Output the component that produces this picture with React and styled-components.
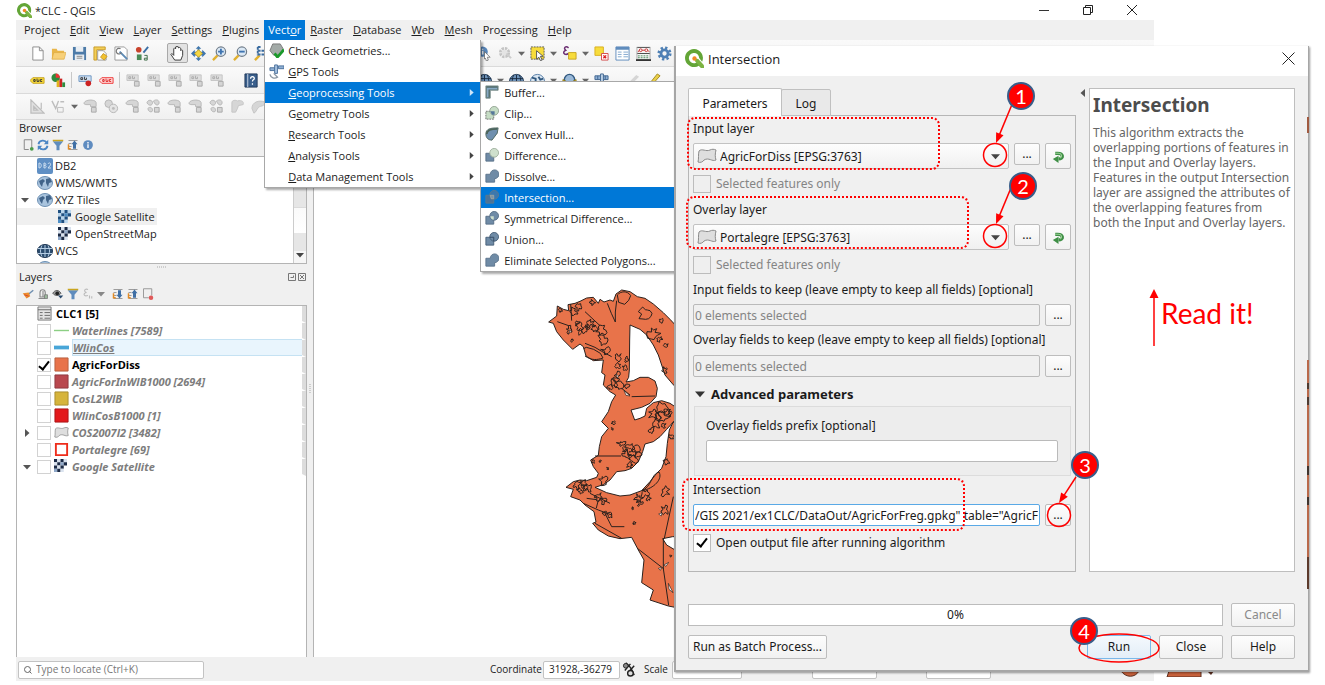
import React from "react";
import styled, { createGlobalStyle } from "styled-components";

const UI = '"Open Sans", "Noto Sans", sans-serif';
const FORM = '"Noto Sans", "Open Sans", sans-serif';

const Global = createGlobalStyle`
  * { box-sizing: border-box; }
  body { margin: 0; background: #fff; color: #1c1c1c; font: 11px/17px ${UI}; overflow: hidden; }
  button, input, select { font: inherit; color: inherit; margin: 0; }
  svg { display: block; flex: none; }
`;

/* ---------- main window ---------- */
const Desktop = styled.div`
  position: relative;
  height: 100vh;
  padding: 0 171px 4px 16px;
`;
const Win = styled.main`
  display: flex;
  flex-direction: column;
  height: 100%;
  background: #f0f0f0;
`;
const TitleBar = styled.header`
  display: flex;
  align-items: center;
  height: 20px;
  background: #fff;
  flex: none;
  padding-left: 1px;
`;
const TitleText = styled.h1`
  flex: 1;
  margin: 0;
  padding-left: 3px;
  font-weight: 400;
  font-size: 11px;
`;
const WinButton = styled.button`
  width: 44px;
  height: 20px;
  border: 0;
  padding: 0;
  background: none;
  display: grid;
  place-items: center;
`;
const MenuBar = styled.nav`
  display: flex;
  height: 20px;
  padding-left: 3px;
  flex: none;
`;
const MenuSlot = styled.div`
  position: relative;
`;
const MenuButton = styled.button`
  height: 20px;
  padding: 0 5px 1px;
  border: 0;
  white-space: nowrap;
  background: ${(p) => (p.$open ? "#0078d7" : "none")};
  color: ${(p) => (p.$open ? "#fff" : "inherit")};
  ${(p) => p.$open && "padding: 0 4px 1px;"}
`;
const Menu = styled.div`
  position: absolute;
  z-index: 5;
  left: 0;
  top: 100%;
  width: 217px;
  background: #fff;
  border: solid #a8a8a8;
  border-width: 0 1px 1px;
  box-shadow: 2px 2px 2px #0005;
  ${(p) => p.$sub && "left: 100%; top: -1px; width: 216px; border-top-width: 1px;"}
`;
const MenuRow = styled.div`
  position: relative;
`;
const MenuItem = styled.button`
  display: flex;
  align-items: center;
  width: 100%;
  height: 21px;
  padding: 0 5px 1px 4px;
  border: 0;
  gap: 4px;
  text-align: left;
  white-space: nowrap;
  background: ${(p) => (p.$on ? "#0078d7" : "#fff")};
  color: ${(p) => (p.$on ? "#fff" : "#1c1c1c")};
`;
const MenuIcon = styled.span`
  width: 15px;
  height: 15px;
  flex: none;
`;
const Grow = styled.span`
  flex: 1;
`;
const ToolBar = styled.div`
  display: flex;
  align-items: center;
  height: ${(p) => p.$h || 27}px;
  padding-left: 11px;
  flex: none;
  background: linear-gradient(#fafafa, #f0f0f0);
  border-bottom: 1px solid #dadada;
`;
const ToolButton = styled.button`
  width: 21px;
  height: 20px;
  padding: 0;
  border: 1px solid ${(p) => (p.$on ? "#a9a9a9" : "transparent")};
  border-radius: 2px;
  background: ${(p) => (p.$on ? "#e2e2e2" : "none")};
  display: grid;
  place-items: center;
  flex: none;
  ${(p) => p.$narrow && "width: 11px;"}
`;
const Gap = styled.span`
  flex: none;
  width: ${(p) => p.$w}px;
`;
const Divider = styled.span`
  flex: none;
  width: 1px;
  height: 16px;
  margin: 0 3px 0 2px;
  background: #c8c8c8;
`;
const Work = styled.div`
  display: flex;
  flex: 1;
  min-height: 0;
`;
const Dock = styled.aside`
  display: flex;
  flex-direction: column;
  width: 291px;
`;
const DockTitle = styled.div`
  display: flex;
  align-items: center;
  justify-content: space-between;
  height: 16px;
  line-height: 16px;
  padding: 0 1px 0 3px;
`;
const DockTools = styled.div`
  display: flex;
  align-items: center;
  gap: 3px;
  height: 18px;
  margin-bottom: 2px;
  padding-left: 6px;
`;
const MiniButton = styled.button`
  width: 12px;
  height: 12px;
  padding: 0;
  border: 0;
  background: none;
`;
const Tree = styled.div`
  position: relative;
  overflow: hidden;
  background: #fff;
  border: 1px solid #b4b4b4;
  ${(p) => (p.$fill ? "flex: 1; border-bottom: 0;" : "height: 108px; flex: none; padding-right: 13px;")}
`;
const Branch = styled.div`
  display: flex;
  align-items: center;
  height: 17px;
  width: ${(p) => (p.$on ? "140px" : "auto")};
  background: ${(p) => (p.$on ? "#f0f0f0" : "none")};
  padding-left: ${(p) => (p.$deep ? 41 : 4)}px;
  gap: ${(p) => (p.$deep ? 4 : 2)}px;
  white-space: nowrap;
`;
const Twisty = styled.span`
  width: 14px;
  flex: none;
`;
const ScrollTrack = styled.div`
  position: absolute;
  right: 0;
  top: 0;
  bottom: 0;
  width: 13px;
  border-left: 1px solid #ccc;
  background: linear-gradient(#e6e6e6 50px, #bbb 50px, #fafafa 51px, #fff 76px, #e6e6e6 76px, #e6e6e6 94px, #f6f6f6 94px);
  display: flex;
  align-items: flex-end;
  justify-content: center;
  padding-bottom: 4px;
`;
const Splitter = styled.div`
  height: ${(p) => (p.$v ? "auto" : "5px")};
  width: ${(p) => (p.$v ? "6px" : "auto")};
  display: grid;
  place-items: center;
  flex: none;
`;
const LayerRow = styled.div`
  display: flex;
  align-items: center;
  height: 17px;
  padding-left: 6px;
  border-right: 4px solid #dcdcdc;
  border-bottom: 2px solid #fff;
  white-space: nowrap;
`;
const LayerSymbol = styled.span`
  width: 15px;
  height: 15px;
  flex: none;
  margin: 0 3px 0 3px;
`;
const LayerName = styled.label`
  font-family: ${(p) => (p.$active ? UI : FORM)};
  font-weight: 700;
  line-height: 15px;
  color: ${(p) => (p.$active ? "#000" : "#7d7d7d")};
  font-style: ${(p) => (p.$active ? "normal" : "italic")};
  ${(p) =>
    p.$hover &&
    "flex: 1; height: 17px; line-height: 15px; text-decoration: underline; background: #e9f5fd; border: 1px solid #c5e2f3; border-right: 0;"}
`;
const Check = styled.input.attrs({ type: "checkbox" })`
  appearance: none;
  flex: none;
  display: grid;
  place-items: center;
  width: ${(p) => p.$s}px;
  height: ${(p) => p.$s}px;
  background: ${(p) => (p.disabled ? "#efefef" : "#fff")};
  border: 1px solid ${(p) => (p.$s > 15 ? "#bcbcbc" : "#d2d2d2")};
  &:checked::after {
    content: "";
    width: 4px;
    height: 9px;
    border: solid #000;
    border-width: 0 2px 2px 0;
    transform: rotate(38deg);
    margin-bottom: 3px;
  }
`;
const Canvas = styled.section`
  flex: 1;
  min-width: 0;
  overflow: hidden;
  background: #fff;
  border-left: 1px solid #b4b4b4;
  padding: 160px 0 0 216px;
`;
const StatusBar = styled.footer`
  display: flex;
  align-items: center;
  height: 24px;
  flex: none;
  padding: 1px 0 0 2px;
  font-size: 10px;
  overflow: hidden;
`;
const StatusBox = styled.div`
  display: flex;
  align-items: center;
  flex: none;
  gap: 4px;
  height: 18px;
  width: ${(p) => p.$w}px;
  padding: 0 5px;
  background: #fff;
  border: 1px solid #c3c3c3;
  border-radius: 2px;
`;
const PlainInput = styled.input`
  border: 0;
  padding: 0;
  width: 100%;
  min-width: 0;
  background: none;
  outline: 0;
  &::placeholder { color: #777; opacity: 1; }
`;
const StatusLabel = styled.label`
  margin-right: ${(p) => p.$r}px;
`;

/* ---------- dialog ---------- */
const Backdrop = styled.div`
  position: absolute;
  z-index: 4;
  right: 110px;
  bottom: 8px;
`;
const MapEdge = styled.div`
  position: absolute;
  z-index: 11;
  right: 16px;
  top: 117px;
  bottom: 96px;
  width: 2px;
  background:
    linear-gradient(#a05a40 16px, transparent 16px 243px, #b9694a 243px 266px, #4d3a30 266px 272px, #b9694a 272px 280px, #4d3a30 280px 288px, #b9694a 288px 349px, #3f332d 349px 358px, #b9694a 358px 380px, #3f332d 380px 388px, #b9694a 388px 440px, #5c3a2c 440px);
`;
const Dialog = styled.section`
  position: absolute;
  z-index: 10;
  left: 674px;
  right: 16px;
  top: 46px;
  display: flex;
  flex-direction: column;
  background: #f0f0f0;
  border: solid #a6a6a6;
  border-width: 0 1px 2px 2px;
  box-shadow: 1px 1px 2px #0006;
  font: 12px/16px ${FORM};
  color: #1a1a1a;
`;
const DialogTitle = styled.header`
  display: flex;
  align-items: center;
  gap: 4px;
  height: 30px;
  padding: 0 13px 5px 9px;
  background: #fff;
  font: 13px/20px ${UI};
`;
const DialogName = styled.h2`
  margin: 0;
  flex: 1;
  font: inherit;
`;
const CloseButton = styled.button`
  padding: 0;
  border: 0;
  background: none;
`;
const DialogBody = styled.div`
  display: grid;
  grid-template-columns: minmax(0, 388fr) 13px minmax(0, 206fr);
  padding: 12px 13px 0 12px;
`;
const Tabs = styled.div`
  display: flex;
  align-items: flex-end;
  height: 28px;
`;
const Tab = styled.button`
  width: ${(p) => (p.$on ? 94 : 50)}px;
  height: ${(p) => (p.$on ? 28 : 27)}px;
  border: 1px solid #c0c0c0;
  border-bottom-width: ${(p) => (p.$on ? 0 : 1)}px;
  border-radius: 2px 2px 0 0;
  margin-right: -1px;
  padding: 2px 0 0;
  background: ${(p) => (p.$on ? "#fff" : "#e9e9e9")};
`;
const Pane = styled.div`
  border: 1px solid #b6b6b6;
  margin-top: -1px;
  height: 457px;
  padding: 3px 4px 0;
`;
const Field = styled.div`
  position: relative;
  padding-bottom: ${(p) => p.$b || 0}px;
`;
const Label = styled.label`
  display: block;
  height: ${(p) => p.$h || 23}px;
  padding-top: ${(p) => p.$t || 0}px;
  line-height: 18px;
  white-space: nowrap;
`;
const Row = styled.div`
  display: flex;
  align-items: flex-start;
  gap: 5px;
`;
const Combo = styled.div`
  position: relative;
  flex: 1;
  min-width: 0;
`;
const Select = styled.select`
  appearance: none;
  width: 100%;
  height: 26px;
  padding: 2px 30px 0 26px;
  border: 1px solid #c2c2c2;
  border-radius: 2px;
  background: linear-gradient(#fdfdfd, #f0f0f0);
`;
const Over = styled.span`
  position: absolute;
  pointer-events: none;
  ${(p) => (p.$end ? "right: 9px; top: 9px;" : "left: 4px; top: 3px;")}
`;
const Button = styled.button`
  height: ${(p) => p.$h || 22}px;
  width: ${(p) => p.$w || 26}px;
  flex: none;
  display: grid;
  place-items: center;
  padding: 0;
  border: 1px solid ${(p) => (p.$default ? "#7ab8ea" : "#bdbdbd")};
  border-radius: 2px;
  white-space: nowrap;
  background: ${(p) => (p.$default ? "linear-gradient(#f4f9fd, #e3eef7)" : "linear-gradient(#fdfdfd, #f1f1f1)")};
  &:disabled { color: #8a8a8a; }
`;
const CheckLine = styled.label`
  display: flex;
  align-items: center;
  gap: 5px;
  height: 18px;
  margin-top: ${(p) => p.$t || 6}px;
  color: ${(p) => (p.$off ? "#858585" : "inherit")};
`;
const TextInput = styled.input`
  display: block;
  flex: 1;
  min-width: 0;
  width: 100%;
  height: 22px;
  padding: 0 1px;
  border: 1px solid ${(p) => (p.$focus ? "#5aa9e6" : "#bababa")};
  border-radius: 2px;
  background: ${(p) => (p.readOnly ? "#f0f0f0" : "#fff")};
  color: ${(p) => (p.readOnly ? "#858585" : "inherit")};
  outline: 0;
`;
const GroupTitle = styled.button`
  display: flex;
  align-items: center;
  gap: 6px;
  height: 25px;
  padding: 0 0 0 2px;
  border: 0;
  background: none;
  font-weight: 700;
  font-size: 13px;
`;
const GroupBox = styled.div`
  height: 70px;
  margin-left: 1px;
  padding: 10px 12px 0 11px;
  border: 1px solid #dcdcdc;
  background: #ededed;
`;
const Collapse = styled.div`
  padding: 1px 0 0 3px;
`;
const HelpPane = styled.article`
  background: #fff;
  border: 1px solid #bebebe;
  padding: 6px 3px;
  color: #666;
  line-height: 15px;
`;
const HelpTitle = styled.h3`
  margin: 0 0 10px;
  font-size: 19px;
  line-height: 20px;
  color: #4d4d4d;
`;
const HelpText = styled.p`
  margin: 0;
`;
const DialogFoot = styled.footer`
  display: grid;
  gap: 8px;
  padding: 31px 13px 11px 12px;
`;
const FootRow = styled.div`
  display: flex;
  align-items: center;
  gap: 8px;
`;
const Progress = styled.div`
  flex: 1;
  height: 22px;
  border: 1px solid #bcbcbc;
  background: #fff;
  text-align: center;
  line-height: 20px;
`;
const Anchor = styled.div`
  position: relative;
  flex: none;
`;

/* ---------- red tutorial marks ---------- */
const Dotted = styled.span`
  position: absolute;
  z-index: 2;
  pointer-events: none;
  border: 2px dotted #f00;
  border-radius: 8px;
  top: ${(p) => p.$t}px;
  left: ${(p) => p.$l}px;
  width: ${(p) => p.$w}px;
  height: 53px;
`;
const Callout = styled.span`
  position: absolute;
  z-index: 3;
  pointer-events: none;
  right: ${(p) => p.$r}px;
  top: ${(p) => p.$t}px;
`;
const Num = styled.span`
  position: absolute;
  left: ${(p) => p.$x}px;
  top: ${(p) => p.$y}px;
  width: 28px;
  height: 28px;
  border: 2px solid #385d8a;
  border-radius: 50%;
  background: #f00;
  color: #fff;
  font: 20px/24px Lato, sans-serif;
  text-align: center;
`;
const Note = styled.div`
  display: flex;
  gap: 2px;
  margin: 59px 0 0 56px;
  color: #f00;
  font: 28px/48px Lato, sans-serif;
`;

/* ---------- icons ---------- */
const Svg = ({ s = 15, w, h, vb = "0 0 16 16", children }) => (
  <svg width={w || s} height={h || s} viewBox={vb} fill="none" aria-hidden="true">
    {children}
  </svg>
);
const Tri = ({ d = "down", c = "#555", w = 7 }) => (
  <Svg w={w} h={w} vb="0 0 8 8">
    <path fill={c} d={{ down: "M0 2h8L4 6.5z", right: "M2 0v8l4.5-4z", left: "M6 0v8L1.500 4z" }[d]} />
  </Svg>
);
const QLogo = ({ s }) => (
  <Svg s={s} vb="0 0 20 20">
    <path d="M9.500 0a9.500 9.500 0 1 0 5 17.600L17 20h3l-4.500-5-3-1-2 .9A5.400 5.400 0 1 1 14.900 9.500l3.100 4A9.500 9.500 0 0 0 9.500 0z" fill="#63a537" />
    <path d="m11 10 3 .5L20 17v3h-3l-6.500-7z" fill="#7cb342" />
    <circle cx="10" cy="10" r="2.300" fill="#f08a24" />
  </Svg>
);
const Poly = ({ w = 16 }) => (
  <Svg w={w} h={w} vb="0 0 20 20">
    <path d="M2 5c3-3 7 1 11-1 2-1 4-1 6 0-1 4-1 7 0 10-4 2-7-3-12 0-1 2-4 3-6 2 1-4 0-7 1-11z" fill="#dedede" stroke="#8b8b8b" />
  </Svg>
);
const Tiles = ({ dark }) => {
  const c = dark ? ["#1c2b46", "#8fa8c8", "#d9e2ee"] : ["#1f4f80", "#4d8ec6", "#b9d6ee"];
  const cells = [0, 2, 0, 2, 2, 0, 1, 0, 0, 2, 0, 9, 1, 0, 2, 9];
  return (
    <Svg s={13}>
      {cells.map((v, i) => (v < 9 ? <rect key={i} x={(i % 4) * 4} y={Math.floor(i / 4) * 4} width="4" height="4" fill={c[v]} /> : null))}
    </Svg>
  );
};
const Globe = ({ dark }) => (
  <Svg w={16} h={16}>
    <ellipse cx="8" cy="8" rx="7.500" ry="6.500" fill={dark ? "#2b4c6f" : "#a9c4de"} stroke={dark ? "#1d3552" : "#6d90b3"} />
    {dark ? (
      <path d="M1 5.500h14M1 10.500h14M8 2v12M5 2.500c-2 4-2 7 0 11M11 2.500c2 4 2 7 0 11" stroke="#b5cde4" />
    ) : (
      <path d="M2 6l4-2 2 2-2 2-1 4-2-3zM9 4l4-1 2 4-3 1-1 4-2-4z" fill="#41648a" />
    )}
  </Svg>
);
const Db2 = () => (
  <Svg s={16}>
    <rect width="16" height="16" rx="2" fill="#5f8fc4" />
    <path d="M2 5v5c3 0 3-5 0-5M7 5v5c3 0 3-2.500 0-2.500 2.500 0 2.500-2.500 0-2.500M11 6c1-2 3-1 2.500 1L11 10h3" stroke="#cfe0f2" />
  </Svg>
);
const Blade = () => <path d="M9 9h5v5H9z" fill="#d5d5d5" stroke="#aaa" />;
const Mag = ({ sign }) => (
  <>
    <path d="M6 10 1 15" stroke="#e0b030" strokeWidth="2.500" />
    <circle cx="9.500" cy="6" r="5" fill="#dce9f5" stroke="#6e7b88" strokeWidth="1.300" />
    <path d={sign === "+" ? "M9.500 3v6M6.500 6h6" : "M6.500 6h6"} stroke="#3f74b0" strokeWidth="2" />
  </>
);
const art = {
  newdoc: <path d="M3 1h7l4 4v10H3zM10 1v4h4" fill="#fff" stroke="#8c8c8c" />,
  open: (
    <>
      <path d="M1 3h5l1 2h7v9H1z" fill="#e9b64a" />
      <path d="M1 14 3 7h13l-2 7z" fill="#f7d079" stroke="#d9a63a" strokeWidth=".6" />
    </>
  ),
  save: (
    <>
      <path d="M1 1h14v14H1z" fill="#4d7ba8" />
      <path d="M4 1h8v5H4zM3 9h10v6H3z" fill="#e9eef3" />
      <path d="M5 11h6M5 13h6" stroke="#888" />
    </>
  ),
  layout: (
    <>
      <path d="M1 1h12v3H4v11H1z" fill="#f3cf57" stroke="#c99a28" />
      <path d="M5 5h6l3 3v7H5z" fill="#fff" stroke="#999" />
      <path d="m11 8 4 3-3 4-4-3z" fill="#f2c230" stroke="#c99a28" />
    </>
  ),
  layouts: (
    <>
      <path d="M1 1h10l3 3v11H1z" fill="#fff" stroke="#999" />
      <path d="m6 6 8 8" stroke="#5e8bb5" strokeWidth="2" />
      <path d="M7 3a3 3 0 1 0 1 4" stroke="#777" strokeWidth="1.300" />
    </>
  ),
  style: (
    <>
      <circle cx="4" cy="4" r="3" fill="#c9432c" />
      <path d="m9 7 5-6" stroke="#3a6ea5" strokeWidth="2" />
      <path d="M2 9h5v6H2z" fill="#4b8b57" />
      <path d="M10 10h3v5h-3v-2h3" stroke="#3b6b44" />
    </>
  ),
  hand: <path d="M5 15 1 9l1-1 2 2V3l1-1 1 1V1l1.500-.5L9 1v1l1-.5 1.500 1V5l1-1 1 1v5l-2 5z" fill="#fff" stroke="#333" />,
  pan: (
    <>
      <path d="M8 0l3 3H9v3h3V4l4 4-4 4v-2H9v3h2l-3 3-3-3h2v-3H4v2L0 8l4-4v2h3V3H5z" fill="#3f76ad" />
      <path d="m8 4 4 4-4 4-4-4z" fill="#f6d743" stroke="#c9a520" />
    </>
  ),
  zin: <Mag sign="+" />,
  zout: <Mag sign="-" />,
  zfull: (
    <>
      <path d="M6 10 1 15" stroke="#e0b030" strokeWidth="2.500" />
      <path d="M4 1v9M4 5h10M12 1v4M4 1h3M4 9h10" stroke="#3b6ca0" strokeWidth="2" strokeDasharray="3 1" />
    </>
  ),
  identify: (
    <>
      <circle cx="6" cy="6" r="5.500" fill="#5785b8" />
      <path d="M6 3v1M6 5v4" stroke="#fff" strokeWidth="1.500" />
      <path d="m8 6 6 6h-3l1 3-2 1-1-3-1 1z" fill="#fff" stroke="#666" strokeWidth=".8" />
    </>
  ),
  action: (
    <>
      <circle cx="7" cy="7" r="4.500" stroke="#c4c4c4" strokeWidth="3" strokeDasharray="2.500 1" />
      <circle cx="7" cy="7" r="3" fill="#e4e4e4" />
      <path d="m9 8 5 5" stroke="#ccc" strokeWidth="2" />
    </>
  ),
  select: (
    <>
      <path d="M1 1h14v13H1z" fill="#f7dc3c" stroke="#555" strokeDasharray="2 1" />
      <path d="m7 5 7 6h-3l2 4-2 .5L9.500 12 7 14z" fill="#fff" stroke="#555" />
    </>
  ),
  expr: (
    <>
      <path d="M7 2C4-.5 1 2 4 4.500 0 6 2 11 7 8" stroke="#6b2d72" strokeWidth="1.600" />
      <path d="M7 7h8v7H7z" fill="#f7dc3c" stroke="#c9a520" />
    </>
  ),
  deselect: (
    <>
      <path d="M1 1h9v9H1z" fill="#f7dc3c" stroke="#d9b020" />
      <path d="M8 8h7v7H8z" fill="#fff" stroke="#d24b4b" />
      <path d="m10 10 3 3m0-3-3 3" stroke="#d22" strokeWidth="1.500" />
    </>
  ),
  table: (
    <>
      <path d="M1 1h14v14H1z" fill="#fff" stroke="#5f8cbd" />
      <path d="M1 2.500h14" stroke="#5f8cbd" strokeWidth="3" />
      <path d="M3 6.500h4M3 9h4M3 11.500h4M9 6.500h5M9 9h5M9 11.500h5" stroke="#7fa6ce" />
    </>
  ),
  stats: (
    <>
      <path d="M1 1.500h14M1 8h14" stroke="#444" />
      <circle cx="5" cy="4.500" r="1.500" stroke="#c33" />
      <circle cx="11" cy="4.500" r="1.500" stroke="#c33" />
      <path d="M2 6.500l1.500-2M6.500 4.500l3 0M12.500 4.500l2 2" stroke="#c33" />
      <path d="M2 10.500h12M2 12.500h12" stroke="#4a8a5a" strokeDasharray="2 1" />
      <path d="M0 15h16" stroke="#333" strokeWidth="2" />
      <path d="M1 1v13M15 1v13" stroke="#aaa" />
    </>
  ),
  gear: (
    <>
      <circle cx="8" cy="8" r="6" stroke="#4f80b5" strokeWidth="3" strokeDasharray="2.400 2.300" />
      <circle cx="8" cy="8" r="3.800" stroke="#4f80b5" strokeWidth="3" />
    </>
  ),
  tagY: (
    <>
      <path d="M0 8l3-3h12v6H3z" fill="#f6d93b" stroke="#c9a520" />
      <path d="M4 7h1.500v2H4zM7.500 6v3h2V7M13 7h-2v2h2" stroke="#333" />
    </>
  ),
  pie: (
    <>
      <circle cx="5" cy="5" r="4.500" fill="#2e8b3d" />
      <path d="M5 5V.5A4.500 4.500 0 0 1 9.500 5z" fill="#e33" />
      <path d="M6 8h3v7H6z" fill="#e2b21e" />
      <path d="M9 6h3v9H9z" fill="#c22" />
      <path d="M12 10h3v5h-3z" fill="#2e8b3d" />
    </>
  ),
  tagPin: (
    <>
      <path d="M1 3h13v6H1z" fill="#cfe0f2" stroke="#6d95c2" />
      <path d="M3 5h2v2H3zM7 4v3h2V5" stroke="#333" />
      <circle cx="11" cy="11" r="3" fill="#c22" />
    </>
  ),
  tagR: (
    <>
      <path d="M0 8l3-3h12v6H3z" fill="#fdd" stroke="#e33" />
      <path d="M4 7h1.500v2H4zM7.500 6v3h2V7M13 7h-2v2h2" stroke="#d22" />
    </>
  ),
  tagG: (
    <>
      <path d="M1 2h12v6H1z" fill="#dedede" stroke="#c4c4c4" />
      <path d="M3 4h2v2H3zM7 3v3h2V4" stroke="#aaa" />
      <Blade />
    </>
  ),
  book: (
    <>
      <path d="M1 1h13v14H1z" fill="#3a5f8c" stroke="#21395a" />
      <path d="M4 1v14" stroke="#cdd9e8" />
      <path d="M7 6c0-3 4-3 4 0 0 1-2 1-2 3M9 11v1.500" stroke="#fff" strokeWidth="1.300" />
    </>
  ),
  ruler: <path d="M1 1v14h14zM4 8v4h4zM12 11V4" fill="#e0e0e0" stroke="#bdbdbd" strokeWidth="1.300" />,
  vert: (
    <>
      <path d="m1 2 4 8 3-8M10 3h4" stroke="#bdbdbd" strokeWidth="1.500" />
      <path d="M7 9h6v5H7z" stroke="#bdbdbd" />
    </>
  ),
  shapeA: (
    <>
      <path d="M1 5c0-5 13-5 13-1v4H8V6H3z" fill="#d6d6d6" stroke="#b9b9b9" />
      <Blade />
    </>
  ),
  shapeB: (
    <>
      <path d="M1 4c1-4 6-3 6 0s-4 4-6 0zM8 2c3-2 6-1 6 2s-4 4-6-2zM2 10c2-2 5-1 5 2s-5 2-5-2z" fill="#d6d6d6" stroke="#b5b5b5" />
      <Blade />
    </>
  ),
  shapeC: (
    <>
      <circle cx="5" cy="5" r="4" fill="#d6d6d6" stroke="#b5b5b5" />
      <circle cx="10" cy="10" r="4.500" fill="#e4e4e4" stroke="#b5b5b5" />
      <circle cx="10" cy="10" r="1.500" fill="#bbb" />
    </>
  ),
  shapeD: <path d="M2 14V4c0-3 4-3 6-2 5-1 7 1 6 4l-5 1-1 3-2 4z" fill="#d6d6d6" stroke="#c4c4c4" />,
  shapeE: <path d="M1 10c0-7 8-9 13-7 2 5-4 4-6 6s-3 6-5 6z" fill="#d6d6d6" stroke="#c4c4c4" />,
  world: (
    <>
      <circle cx="8" cy="9" r="7.500" fill="#6f94ba" stroke="#1d3552" />
      <path d="M1 6h14M8 2v14M5 2c-2 4-2 8 0 12M11 2c2 4 2 8 0 12" stroke="#16293f" />
    </>
  ),
  worldL: (
    <>
      <circle cx="8" cy="9" r="7.500" fill="#dbe7f2" stroke="#5079a3" />
      <path d="M2 5l4 1v4M9 4l2 3 3-1" stroke="#31587f" strokeWidth="2" />
    </>
  ),
  box3: (
    <>
      <circle cx="8" cy="7" r="5.500" fill="#9ab9d8" stroke="#31587f" strokeWidth="1.500" />
      <path d="M1 7l7 4 7-4v8H1z" fill="#e9c52c" stroke="#8a7418" />
    </>
  ),
  sat: (
    <>
      <path d="M1 3h14v4H1z" fill="#8fb0d4" stroke="#3f648f" />
      <path d="M7 1h3v9H7zM4 3v4M12 3v4" fill="#c3d6ea" stroke="#3f648f" />
      <path d="M2 9c0 3 2 5 5 5l1-3" stroke="#7f93a8" strokeWidth="1.500" />
    </>
  ),
  pen: <path d="m3 15 1-4 8-10 3 2-9 10z" fill="#e9cf4a" stroke="#a48a1e" />,
  penG: <path d="m2 15 2-5 8-8 3 2-9 9z" fill="#d5d5d5" />,
};
const gp = {
  check: (
    <>
      <path d="M4 1h8l3 5-3 7H5L1 8z" fill="#a3aaa7" stroke="#777" />
      <path d="m6 11 3 4 7-8" stroke="#1a9a2a" strokeWidth="3" />
    </>
  ),
  sat: (
    <>
      <path d="M1 4h5v3H1zM10 2h6v3h-6z" fill="#8fb0d4" stroke="#4a6f9b" />
      <path d="M6 1h3v9H6z" fill="#a9c4e2" stroke="#4a6f9b" />
      <path d="M1 11c1 4 5 5 8 3l-4-4" stroke="#8a96a3" strokeWidth="1.500" />
    </>
  ),
  buffer: (
    <>
      <path d="M1 1h14v5H6v9H1z" fill="#4f6b6b" stroke="#7d9190" />
      <path d="M3 14V4h11" stroke="#87a9c4" strokeWidth="2" />
    </>
  ),
  clip: (
    <>
      <path d="M1 6h9v9H1z" fill="#c5dcc4" stroke="#666" strokeDasharray="2 1" />
      <circle cx="10.500" cy="5.500" r="5" fill="#c5dcc4" stroke="#8fa08f" />
      <path d="M6 6h5v4H8z" fill="#56789a" />
    </>
  ),
  hull: (
    <>
      <path d="M1 8C1 2 6 1 15 1l-1 6-6 8c-5 0-7-3-7-7z" fill="#6f8fae" stroke="#4c6459" />
      <path d="M2 8c0-5 5-6 12-6" stroke="#4c6459" strokeWidth="2" />
    </>
  ),
  diff: (
    <>
      <path d="M1 6h9v9H1z" fill="#6f8ba6" stroke="#536c84" />
      <circle cx="10.500" cy="5.500" r="5" fill="#cfe0cd" stroke="#9aab99" />
    </>
  ),
  dissolve: <path d="M1 6h5a5 5 0 1 1 5 5v4H1z" fill="#6f8ba6" stroke="#587189" />,
  inter: (
    <>
      <path d="M1 6h9v9H1z" fill="#4a7399" stroke="#5f7a8c" />
      <circle cx="10.500" cy="5.500" r="5" fill="#3c78ad" stroke="#5f7a8c" />
      <path d="M6 6h4v4H7z" fill="#7b93a5" stroke="#c2b9a0" strokeWidth=".6" />
    </>
  ),
  sym: (
    <>
      <path d="M1 6h9v9H1z" fill="#6f8ba6" stroke="#536c84" />
      <circle cx="10.500" cy="5.500" r="5" fill="#6f8ba6" stroke="#536c84" />
      <path d="M6 6h4v4c-2 0-4-2-4-4z" fill="#cfe0cd" />
    </>
  ),
  union: (
    <>
      <path d="M1 6h9v9H1z" fill="#6f8ba6" stroke="#415a73" />
      <circle cx="10.500" cy="5.500" r="5" fill="#6f8ba6" stroke="#415a73" />
      <path d="M5.500 6H10v4.500" stroke="#2f465e" />
    </>
  ),
};
const mini = {
  add: (
    <>
      <path d="M3 1h10v10M3 1v13h6" stroke="#888" strokeWidth="1.300" />
      <circle cx="13" cy="13" r="2.500" fill="#4b9b4b" />
    </>
  ),
  refresh: (
    <>
      <path d="M2 7c1-6 9-6 11-2M14 9c-1 6-9 6-11 2" stroke="#4b86c4" strokeWidth="2.500" />
      <path d="M15 1v6H9zM1 15V9h6z" fill="#4b86c4" />
    </>
  ),
  funnel: (
    <>
      <path d="M1 3h14l-5 6v6H6V9z" fill="#5f8cbd" />
      <path d="M1 2h14" stroke="#c9a520" strokeWidth="2" />
    </>
  ),
  collapse: (
    <>
      <path d="M2 2h12M2 6h4M2 10h4M2 14h12" stroke="#999" strokeWidth="1.300" />
      <path d="M10 2l4 5h-2v6H8V7H6z" fill="#3f6fa5" />
      <path d="M2 7v6h3" stroke="#e38b24" strokeWidth="2" />
    </>
  ),
  expand: (
    <>
      <path d="M2 2h12M2 6h4M2 10h4M2 14h12" stroke="#999" strokeWidth="1.300" />
      <path d="M10 14l4-5h-2V3H8v6H6z" fill="#3f6fa5" />
      <path d="M2 7v6h3" stroke="#e38b24" strokeWidth="2" />
    </>
  ),
  info: (
    <>
      <circle cx="8" cy="8" r="6.500" fill="#5f8cc0" />
      <path d="M8 4v2M8 7v5" stroke="#fff" strokeWidth="1.800" />
    </>
  ),
  brush: (
    <>
      <path d="m9 8 6-5" stroke="#6f8fb0" strokeWidth="2" />
      <path d="M1 7l8-1 2 5-5 3z" fill="#ec8d2d" />
      <path d="m3 9 6 2" stroke="#c33" />
    </>
  ),
  group: (
    <>
      <path d="M4 12V6c0-5 7-5 7 0v6zM2 14h9M8 4v8" stroke="#888" strokeWidth="1.500" />
      <path d="M10 9h4v5h-4z" fill="#9ab89a" stroke="#777" />
    </>
  ),
  eye: (
    <>
      <path d="M1 7c3-5 8-5 11 0-3 4-8 4-11 0z" fill="#999" stroke="#444" />
      <circle cx="7" cy="7" r="2.500" fill="#222" />
      <path d="M8 10h7l-3.500 4z" fill="#29496d" />
    </>
  ),
  eps: <path d="M8 2C3 0 2 5 6 6 1 7 2 12 8 10M10 10v4M13 11v3" stroke="#bbb" strokeWidth="1.500" />,
  remove: (
    <>
      <path d="M2 1h11v9M2 1v12h7" stroke="#999" strokeWidth="1.300" />
      <circle cx="12" cy="13" r="3" fill="#e05a5a" />
    </>
  ),
};
const Refresh = () => (
  <Svg s={13}>
    <path d="M4 4h3c7 0 8 7 1 7" stroke="#3f8f46" strokeWidth="4" />
    <path d="M8 7v9L1 11z" fill="#3f8f46" />
    <path d="M4 4h4c4 0 5 4 2 6" stroke="#9fd29a" strokeWidth="1.300" />
  </Svg>
);

/* ---------- map ---------- */
const blob = (cx, cy, r, seed) => {
  let s = seed * 7919 + 13;
  const rnd = () => ((s = (s * 16807) % 2147483647) / 2147483647);
  const n = 13;
  let d = "";
  for (let i = 0; i < n; i++) {
    const a = (i / n) * 6.283;
    const k = r * (0.25 + rnd() * 0.95);
    d += `${i ? "L" : "M"}${Math.round(cx + Math.cos(a) * k)} ${Math.round(cy + Math.sin(a) * k)}`;
  }
  return d + "Z";
};
const clusters = [
  [120, 150, 12], [127, 182, 5], [150, 140, 13], [165, 150, 12], [180, 130, 14], [195, 145, 11], [150, 158, 8], [215, 150, 16], [220, 180, 18],
  [140, 130, 9], [172, 140, 9], [228, 212, 14], [188, 68, 9], [345, 100, 20], [370, 160, 20], [388, 178, 9], [408, 195, 7], [395, 120, 9], [405, 270, 9],
  [265, 232, 12], [290, 240, 10], [262, 258, 10], [285, 265, 10], [262, 285, 11], [250, 310, 13], [270, 318, 15], [290, 320, 9], [240, 322, 9], [258, 300, 10],
  [370, 400, 16], [395, 385, 18], [400, 410, 18], [380, 430, 15], [410, 395, 12], [365, 450, 12], [400, 435, 10], [385, 410, 12], [420, 400, 9], [250, 428, 6], [247, 446, 4],
  [275, 492, 14], [300, 500, 14], [320, 510, 13], [290, 525, 16], [310, 540, 15], [325, 525, 10], [298, 555, 10], [305, 520, 12], [285, 510, 9],
  [190, 545, 6], [210, 544, 4], [234, 566, 5],
  [140, 615, 15], [160, 610, 14], [175, 625, 12], [150, 632, 10], [165, 622, 10], [220, 600, 15], [205, 650, 12], [220, 660, 12], [325, 655, 13], [345, 640, 13], [330, 670, 9],
  [355, 655, 8], [405, 635, 16], [405, 690, 14], [308, 685, 4], [313, 730, 5], [240, 705, 9], [225, 700, 7], [410, 545, 11], [425, 470, 8],
  [130, 95, 13], [145, 82, 12], [422, 828, 3], [90, 90, 7],
];
const MapArt = () => (
  <svg width="150" height="340" viewBox="0 0 450 1020" fill="none" aria-label="AgricForDiss layer" role="img">
    <g stroke="#2b211d" strokeWidth="3" strokeLinejoin="round">
      <path
        fill="#e8734a"
        d="M56 126 80 108 82 78 100 88 116 92 114 74 135 70 150 64 170 54 190 52 205 70 210 58 222 66 240 60 250 64 258 42 275 30 300 35 322 50 345 55 370 72 400 98 420 118 450 150V335L428 312 405 285 395 255 385 225 370 195 350 165 330 148 300 135 299 180 298 270 296 292 288 306 310 302 330 292 355 292 375 303 382 325 378 350 360 370 335 382 303 390 314 420 330 415 345 408 350 385 370 368 395 362 420 370 450 390V415L428 428 410 448 390 470 370 485 345 492 338 515 325 545 305 565 285 572 260 575 240 600 220 614 195 622 230 638 270 648 300 645 335 632 360 605 380 580 395 565 408 530 412 490 418 450 430 425 450 420V770H428L398 776 410 795 432 808H450V985L415 978 360 960 370 930 335 908 342 840 325 810 305 772 270 776 235 768 205 750 188 730 198 726 192 695 165 675 150 660 122 650 130 628 108 622 130 605 150 600 170 602 200 592 205 580 190 560 182 540 205 526 208 500 215 470 235 445 215 425 235 395 245 365 257 345 240 335 220 315 225 285 215 278 220 240 190 242 168 228 160 200 150 192 128 208 100 180 80 155 70 130z"
      />
      <path d="M262 45c10-12 30-14 40 2l-6 14-12 12-18-6zM335 632c30-10 28-50 52-56 12 20-14 50-52 56zM165 228c20 14 36 12 54 6l-8-14-20-12-22-6-8 4" />
      {clusters.map(([x, y, r], i) => (
        <path key={i} d={blob(x, y, r, i + 1)} />
      ))}
      <path
        d="M195 528h78M225 700l20 40h38M195 730l80 45M322 805l80 62M400 776v90l16 110M430 650 403 775M165 95l45 42M122 72l3 50M82 125l34 12M165 190l30 12 20 12 30 16M232 70l12 30 12 26 0-30 4-34M305 350l70-2M180 640l60 30M300 345l-25-20M160 670l45 20 40 15M170 655l30 4M205 660l-6 24"
      />
      <path fill="#fff" strokeWidth="2" d="M118 150l6 4-6 6zM258 282l8 6-4 6zM282 332l18 16-12-2zM385 865l10-2-4 8zM402 855l14-8-8 12zM386 702l10-4-2 10zM415 910l14 28-12-10z" />
    </g>
  </svg>
);

/* ---------- helpers and data ---------- */
const Mnemonic = ({ text }) => {
  const i = text.indexOf("&");
  if (i < 0) return text;
  return (
    <span>
      {text.slice(0, i)}
      <u>{text[i + 1]}</u>
      {text.slice(i + 2)}
    </span>
  );
};
const menus = ["Pro&ject", "&Edit", "&View", "&Layer", "&Settings", "&Plugins", "Vect&or", "&Raster", "&Database", "&Web", "&Mesh", "Pro&cessing", "&Help"];
const vectorMenu = [
  ["Check Geometries...", "check"],
  ["&GPS Tools", "sat"],
  ["&Geoprocessing Tools"],
  ["G&eometry Tools"],
  ["&Research Tools"],
  ["&Analysis Tools"],
  ["&Data Management Tools"],
];
const geoMenu = [
  ["Buffer...", "buffer"],
  ["Clip...", "clip"],
  ["Convex Hull...", "hull"],
  ["Difference...", "diff"],
  ["Dissolve...", "dissolve"],
  ["Intersection...", "inter"],
  ["Symmetrical Difference...", "sym"],
  ["Union...", "union"],
  ["Eliminate Selected Polygons...", "dissolve"],
];
const bars = [
  ["newdoc", "open", "save", "layout", "layouts", "style", 14, "*hand", "pan", "zin", "zout", "zfull", 202, "identify", "action", "v", "select", "v", "expr", "v", "deselect", "table", "stats", "gear"],
  ["tagY", "pie", "|", "tagPin", "tagR", "|", "tagG", "tagG", "tagG", "tagG", "tagG", 13, "book", 212, "world", "v", "world", "worldL", "v", "box3", "v", "sat", 10, "penG", "pen"],
  ["ruler", "vert", "v", "shapeA", "shapeC", "shapeA", "shapeB", "shapeA", "shapeA", "shapeB", "shapeD", "shapeE"],
];
const layers = [
  ["Waterlines [7589]", <path d="M0 8h16" stroke="#8ccf84" strokeWidth="1.500" />],
  ["WlinCos", <path d="M0 8h16" stroke="#49a6d8" strokeWidth="4" />],
  ["AgricForDiss", <path d="M1 1h14v14H1z" fill="#e8734a" stroke="#b5603f" />],
  ["AgricForInWlB1000 [2694]", <path d="M1 1h14v14H1z" fill="#b9484e" stroke="#8e3a3f" />],
  ["CosL2WlB", <path d="M1 1h14v14H1z" fill="#d6b43b" stroke="#a88c2f" />],
  ["WlinCosB1000 [1]", <path d="M1 1h14v14H1z" fill="#e3191b" stroke="#a81416" />],
  ["COS2007l2 [3482]", "poly", "right"],
  ["Portalegre [69]", <path d="M2 2h12v12H2z" fill="#fff" stroke="#ee2d1b" strokeWidth="2" />],
  ["Google Satellite", "tiles", "down"],
];

const Bar = ({ items, h }) => (
  <ToolBar $h={h}>
    {items.map((it, i) => {
      if (typeof it === "number") return <Gap key={i} $w={it} />;
      if (it === "|") return <Divider key={i} />;
      if (it === "v")
        return (
          <ToolButton key={i} $narrow aria-label="More">
            <Tri c="#666" w={7} />
          </ToolButton>
        );
      const on = it[0] === "*";
      const name = on ? it.slice(1) : it;
      return (
        <ToolButton key={i} $on={on} aria-label={name}>
          <Svg s={15}>{art[name]}</Svg>
        </ToolButton>
      );
    })}
  </ToolBar>
);
const Minis = ({ names }) => (
  <DockTools>
    {names.map((n, i) => (
      <MiniButton key={i} aria-label={n}>
        {n === "v" ? <Tri c="#888" w={8} /> : <Svg s={12}>{mini[n]}</Svg>}
      </MiniButton>
    ))}
  </DockTools>
);
const Branches = () => (
  <>
    <Branch><Twisty /><Db2 />DB2</Branch>
    <Branch><Twisty /><Globe />WMS/WMTS</Branch>
    <Branch><Twisty><Tri w={8} /></Twisty><Globe />XYZ Tiles</Branch>
    <Branch $deep $on><Tiles />Google Satellite</Branch>
    <Branch $deep><Tiles dark />OpenStreetMap</Branch>
    <Branch><Twisty /><Globe dark />WCS</Branch>
    <Branch><Twisty /><Globe /></Branch>
  </>
);
const Arrow = ({ w, h, from, to, ring }) => {
  const a = Math.atan2(to[1] - from[1], to[0] - from[0]);
  const p = (k, s) => `${to[0] - Math.cos(a) * k - Math.sin(a) * s} ${to[1] - Math.sin(a) * k + Math.cos(a) * s}`;
  return (
    <svg width={w} height={h} viewBox={`0 0 ${w} ${h}`} fill="none" aria-hidden="true">
      <path d={`M${from.join(" ")}L${p(8, 0)}`} stroke="#f00" strokeWidth="1.500" />
      <path d={`M${to.join(" ")}L${p(10, 4)}L${p(10, -4)}Z`} fill="#f00" />
      <circle cx={ring[0]} cy={ring[1]} r="11.500" stroke="#f00" strokeWidth="1.500" />
    </svg>
  );
};
const LayerField = ({ id, label, value, n, outline, tail }) => (
  <Field $b={tail}>
    <Dotted $t={outline[0]} $l={outline[1]} $w={outline[2]} />
    <Label htmlFor={id} $h={24} $t={1}>{label}</Label>
    <Row>
      <Combo>
        <Select id={id} defaultValue={value}>
          <option>{value}</option>
        </Select>
        <Over><Poly w={20} /></Over>
        <Over $end><Tri w={9} c="#444" /></Over>
        <Callout $r={-30} $t={-63}>
          <Arrow w={60} h={90} from={[34, 22]} to={[17, 63]} ring={[16, 75]} />
          <Num $x={n === 1 ? 28 : 30} $y={n === 1 ? 2 : 11}>{n}</Num>
        </Callout>
      </Combo>
      <Button>...</Button>
      <Button $h={26} aria-label="Iterate over this layer"><Refresh /></Button>
    </Row>
    <CheckLine $off>
      <Check $s={18} disabled />
      Selected features only
    </CheckLine>
  </Field>
);

export default function App() {
  return (
    <Desktop>
      <Global />
      <Win>
        <TitleBar>
          <QLogo s={15} />
          <TitleText>*CLC - QGIS</TitleText>
          <WinButton aria-label="Minimize"><Svg s={10} vb="0 0 10 10"><path d="M0 5.500h10" stroke="#333" /></Svg></WinButton>
          <WinButton aria-label="Restore"><Svg s={10} vb="0 0 10 10"><path d="M.5 2.500h7v7h-7zM2.500 2.500v-2h7v7h-2" stroke="#222" /></Svg></WinButton>
          <WinButton aria-label="Close"><Svg s={10} vb="0 0 10 10"><path d="m0 0 10 10M10 0 0 10" stroke="#222" /></Svg></WinButton>
        </TitleBar>
        <MenuBar>
          {menus.map((m) => {
            const open = m === "Vect&or";
            return (
              <MenuSlot key={m}>
                <MenuButton $open={open}><Mnemonic text={m} /></MenuButton>
                {open && (
                  <Menu role="menu">
                    {vectorMenu.map(([t, ic], i) => (
                      <MenuRow key={t}>
                        <MenuItem role="menuitem" $on={i === 2}>
                          <MenuIcon>{ic && <Svg s={15}>{gp[ic]}</Svg>}</MenuIcon>
                          <Mnemonic text={t} />
                          <Grow />
                          {!ic && <Tri d="right" w={7} c={i === 2 ? "#cfe6fa" : "#444"} />}
                        </MenuItem>
                        {i === 2 && (
                          <Menu $sub role="menu">
                            {geoMenu.map(([g, gi]) => (
                              <MenuItem key={g} role="menuitem" $on={gi === "inter"}>
                                <MenuIcon><Svg s={14}>{gp[gi]}</Svg></MenuIcon>
                                {g}
                              </MenuItem>
                            ))}
                          </Menu>
                        )}
                      </MenuRow>
                    ))}
                  </Menu>
                )}
              </MenuSlot>
            );
          })}
        </MenuBar>
        <Bar items={bars[0]} />
        <Bar items={bars[1]} />
        <Bar items={bars[2]} h={26} />
        <Work>
          <Dock>
            <DockTitle>Browser</DockTitle>
            <Minis names={["add", "refresh", "funnel", "collapse", "info"]} />
            <Tree>
              <Branches />
              <ScrollTrack><Tri w={8} c="#444" /></ScrollTrack>
            </Tree>
            <Splitter><Svg w={10} h={2} vb="0 0 10 2"><path d="M0 1h10" stroke="#aaa" strokeDasharray="1 1" /></Svg></Splitter>
            <DockTitle>
              Layers
              <Svg w={18} h={8} vb="0 0 18 8"><path d="M.5.5h7v7h-7zM2.500 4.500h3v-2M10.500.5h7v7h-7zM12 2l4 4M16 2l-4 4" stroke="#777" /></Svg>
            </DockTitle>
            <Minis names={["brush", "group", "eye", "funnel", "eps", "v", "expand", "collapse", "remove"]} />
            <Tree $fill>
              <LayerRow>
                <Twisty />
                <Svg s={15}><path d="M1 1h14v14H1z" fill="#e4e4e4" stroke="#777" /><path d="M1 4h14M3 7h3M3 10h3M3 13h3M8 7h6M8 10h6M8 13h6" stroke="#666" /></Svg>
                <Gap $w={4} />
                <LayerName as="span" $active>CLC1 [5]</LayerName>
              </LayerRow>
              {layers.map(([name, sym, tw], i) => (
                <LayerRow key={name}>
                  <Twisty>{tw && <Tri d={tw} w={8} />}</Twisty>
                  <Check id={`layer${i}`} $s={14} defaultChecked={i === 2} />
                  <LayerSymbol>
                    {sym === "poly" ? <Poly w={15} /> : sym === "tiles" ? <Tiles dark /> : <Svg s={15}>{sym}</Svg>}
                  </LayerSymbol>
                  <LayerName htmlFor={`layer${i}`} $active={i === 2} $hover={i === 1}>{name}</LayerName>
                </LayerRow>
              ))}
            </Tree>
          </Dock>
          <Splitter $v><Svg w={2} h={10} vb="0 0 2 10"><path d="M1 0v10" stroke="#aaa" strokeDasharray="1 1" /></Svg></Splitter>
          <Canvas><MapArt /></Canvas>
        </Work>
        <StatusBar>
          <StatusBox $w={186}>
            <Svg s={8} vb="0 0 8 8"><circle cx="3.500" cy="3.500" r="3" stroke="#666" /><path d="m5.500 5.500 2 2" stroke="#666" /></Svg>
            <PlainInput aria-label="Locate" placeholder="Type to locate (Ctrl+K)" />
          </StatusBox>
          <Gap $w={286} />
          <StatusLabel htmlFor="coord" $r={1}>Coordinate</StatusLabel>
          <StatusBox $w={77}><PlainInput id="coord" defaultValue="31928,-36279" /></StatusBox>
          <Gap $w={2} />
          <Svg s={15}><path d="M4 1c5 3 7 8 9 13M9 2 3 9M13 4 6 12" stroke="#222" strokeWidth="1.500" /><circle cx="4" cy="4" r="2.500" fill="#888" stroke="#222" /><circle cx="9" cy="12" r="3" fill="#ddd" stroke="#222" strokeWidth="1.500" /></Svg>
          <Gap $w={7} />
          <StatusLabel htmlFor="scale" $r={4}>Scale</StatusLabel>
          <StatusBox $w={70}><PlainInput id="scale" /></StatusBox>
          <Gap $w={70} />
          <StatusBox $w={65}><PlainInput aria-label="Magnifier" /></StatusBox>
          <Gap $w={49} />
          <StatusBox $w={65}><PlainInput aria-label="Rotation" /></StatusBox>
        </StatusBar>
      </Win>

      <MapEdge />
      <Backdrop>
        <Svg w={94} h={6} vb="0 0 94 6"><path d="M0 0h18c-4 7-13 7-18 0zM48 0h32v6H46z" fill="#c9623c" stroke="#5b2f20" /><path d="M86 0h7l-3 4z" fill="#5b2f20" /></Svg>
      </Backdrop>

      <Dialog role="dialog" aria-label="Intersection">
        <DialogTitle>
          <QLogo s={19} />
          <DialogName>Intersection</DialogName>
          <CloseButton aria-label="Close dialog"><Svg s={13} vb="0 0 13 13"><path d="m.5.5 12 12m0-12-12 12" stroke="#222" /></Svg></CloseButton>
        </DialogTitle>
        <DialogBody>
          <div>
            <Tabs role="tablist">
              <Tab role="tab" $on>Parameters</Tab>
              <Tab role="tab">Log</Tab>
            </Tabs>
            <Pane>
              <LayerField id="input" label="Input layer" value="AgricForDiss [EPSG:3763]" n={1} outline={[-2, -6, 253]} tail={7} />
              <LayerField id="overlay" label="Overlay layer" value="Portalegre [EPSG:3763]" n={2} outline={[-4, -7, 283]} tail={6} />
              <Field $b={4}>
                <Label htmlFor="inkeep" $h={24} $t={1}>Input fields to keep (leave empty to keep all fields) [optional]</Label>
                <Row><TextInput id="inkeep" readOnly value="0 elements selected" /><Button>...</Button></Row>
              </Field>
              <Field $b={4}>
                <Label htmlFor="ovkeep" $h={25} $t={1}>Overlay fields to keep (leave empty to keep all fields) [optional]</Label>
                <Row><TextInput id="ovkeep" readOnly value="0 elements selected" /><Button>...</Button></Row>
              </Field>
              <GroupTitle><Tri w={10} c="#333" />Advanced parameters</GroupTitle>
              <GroupBox>
                <Label htmlFor="prefix">Overlay fields prefix [optional]</Label>
                <TextInput id="prefix" />
              </GroupBox>
              <Field>
                <Dotted $t={2} $l={-11} $w={283} />
                <Label htmlFor="out" $h={28} $t={5}>Intersection</Label>
                <Row>
                  <TextInput id="out" $focus defaultValue={'/GIS 2021/ex1CLC/DataOut/AgricForFreg.gpkg" table="AgricForFreg"'} />
                  <Anchor>
                    <Button>...</Button>
                    <Callout $r={-29} $t={-55}>
                      <Arrow w={60} h={80} from={[36, 28]} to={[19, 54]} ring={[19, 66]} />
                      <Num $x={31} $y={2}>3</Num>
                    </Callout>
                  </Anchor>
                </Row>
                <CheckLine $t={8}>
                  <Check $s={18} defaultChecked />
                  Open output file after running algorithm
                </CheckLine>
              </Field>
            </Pane>
          </div>
          <Collapse><Tri d="left" w={8} /></Collapse>
          <HelpPane>
            <HelpTitle>Intersection</HelpTitle>
            <HelpText>
              This algorithm extracts the overlapping portions of features in the Input and Overlay layers. Features in the output Intersection layer are assigned the attributes of the overlapping features from both the Input and Overlay layers.
            </HelpText>
            <Note>
              <Svg w={10} h={57} vb="0 0 10 57"><path d="M5 8v49" stroke="#f00" strokeWidth="1.500" /><path d="M5 0l4.500 9h-9z" fill="#f00" /></Svg>
              Read it!
            </Note>
          </HelpPane>
        </DialogBody>
        <DialogFoot>
          <FootRow>
            <Progress role="progressbar" aria-label="Progress" aria-valuenow={0}>0%</Progress>
            <Button $w={64} $h={24} disabled>Cancel</Button>
          </FootRow>
          <FootRow>
            <Button $w={139} $h={24}>Run as Batch Process...</Button>
            <Grow />
            <Anchor>
              <Button $w={64} $h={24} $default>Run</Button>
              <Callout $r={-10} $t={-32}>
                <svg width="92" height="62" viewBox="0 0 92 62" fill="none" aria-hidden="true">
                  <ellipse cx="50" cy="45" rx="40" ry="14" stroke="#f00" strokeWidth="1.500" />
                </svg>
                <Num $x={1} $y={14}>4</Num>
              </Callout>
            </Anchor>
            <Button $w={64} $h={24}>Close</Button>
            <Button $w={64} $h={24}>Help</Button>
          </FootRow>
        </DialogFoot>
      </Dialog>
    </Desktop>
  );
}
